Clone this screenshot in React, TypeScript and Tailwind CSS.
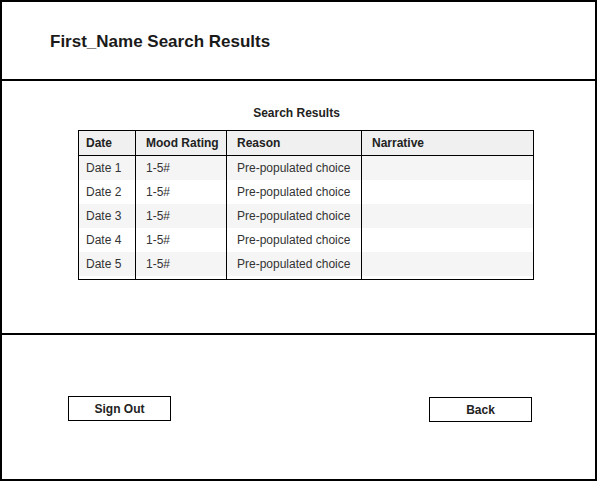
const rows = ['Date 1', 'Date 2', 'Date 3', 'Date 4', 'Date 5']

function Column({ title, width, pad, cells, last }: { title: string; width: string; pad: string; cells: string[]; last?: boolean }) {
  return (
    <div className={`flex flex-col ${width} ${last ? '' : 'border-r border-black'}`}>
      <div className={`h-[25px] border-b border-black bg-[#f0f0f0] flex items-center pb-[1px] ${pad} font-bold text-[#222]`}>
        {title}
      </div>
      {cells.map((c, i) => (
        <div
          key={i}
          className={`h-[24px] flex items-center pb-[1px] ${pad} text-[#333] ${i % 2 === 0 ? 'bg-[#f5f5f5]' : 'bg-white'}`}
        >
          {c}
        </div>
      ))}
      <div className="h-[3px] bg-white" />
    </div>
  )
}

export default function App() {
  return (
    <div className="w-[600px] h-[484px] bg-white font-['Liberation_Sans',Arial,sans-serif]">
      <div className="w-[597px] h-[481px] border-2 border-black flex flex-col">
        <header className="h-[79px] border-b-2 border-black flex items-center pl-[48px] pt-[3px]">
          <h1 className="text-[17px] font-bold text-[#1a1a1a]">First_Name Search Results</h1>
        </header>

        <main className="h-[254px] border-b-2 border-black flex flex-col pt-[25px]">
          <h2 className="text-[12px] leading-[14px] font-bold text-[#222] text-center pr-[4px]">Search Results</h2>
          <div className="mt-[10px] ml-[76px] w-[456px] border border-black flex text-[12px]">
            <Column title="Date" width="w-[57px]" pad="pl-[7px]" cells={rows} />
            <Column title="Mood Rating" width="w-[91px]" pad="pl-[10px]" cells={rows.map(() => '1-5#')} />
            <Column title="Reason" width="w-[135px]" pad="pl-[10px]" cells={rows.map(() => 'Pre-populated choice')} />
            <Column title="Narrative" width="w-[171px]" pad="pl-[10px]" cells={rows.map(() => '')} last />
          </div>
        </main>

        <footer className="flex-1 flex justify-between items-start pl-[66px] pr-[63px] pt-[61px]">
          <button className="w-[103px] h-[25px] border border-black bg-white text-[12px] font-bold text-[#222]">
            Sign Out
          </button>
          <button className="mt-[1px] w-[103px] h-[25px] border border-black bg-white text-[12px] font-bold text-[#222]">
            Back
          </button>
        </footer>
      </div>
    </div>
  )
}
